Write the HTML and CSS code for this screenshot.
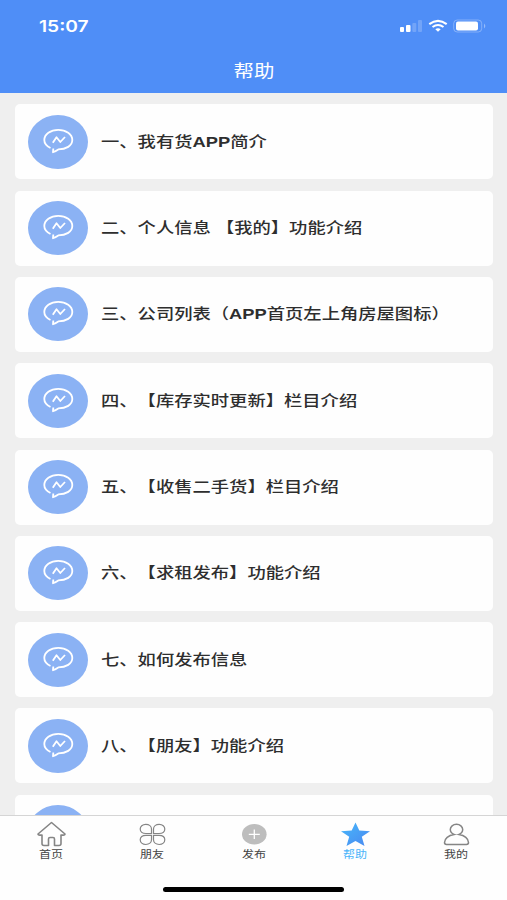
FILE: index.html
```
<!DOCTYPE html>
<html lang="zh-CN">
<head>
    <meta charset="UTF-8">
    <meta name="viewport" content="width=device-width, initial-scale=1.0">
    <title>帮助</title>
    <link rel="stylesheet" href="styles.css">
</head>
<body>
    <svg class="defs" width="0" height="0">
        <symbol id="chat" viewBox="0 0 60 54">
            <path d="M22.500 33C18.500 31 16.300 28.300 16.300 25C16.300 19.200 22.500 14.800 30.300 14.800S44.300 19.200 44.300 25S38 34.400 30.300 34.400C29 35.300 27 36.500 25 37.200L25.300 33.500" />
            <path d="M24.800 27.800L28.500 22.300L32.300 27L37 22" />
        </symbol>
    </svg>
    <div class="page">
        <div class="header">
            <div class="status">
                <span class="time">15:07</span>
                <svg class="signal" width="88" height="16" viewBox="0 0 88 16">
                    <g fill="#fff">
                        <rect x="1" y="9" width="4" height="5" rx="1" />
                        <rect x="7" y="7" width="4.500" height="7" rx="1" />
                        <rect x="13.300" y="5" width="4" height="9" rx="1" opacity=".2" />
                        <rect x="19" y="2" width="4" height="12" rx="1" opacity=".2" />
                        <rect x="57" y="3.500" width="22" height="9" rx="2" />
                        <path d="M85 5.500q2.600 2.500 0 5z" opacity=".4" />
                        <path d="M36.300 11.200q2.700-1.700 5.400 0L39 13.700z" />
                    </g>
                    <rect x="54.700" y="2" width="28" height="12" rx="3.500" fill="none" stroke="#fff" opacity=".3" />
                    <path d="M30.300 6.100q8.700-6.600 17.400 0M33.500 9q5.500-4 11 0" fill="none" stroke="#fff" stroke-width="2.100" />
                </svg>
            </div>
            <div class="title"><span>帮助</span></div>
        </div>
        <div class="list">
            <div class="item"><div class="icon"><svg><use href="#chat" /></svg></div><span class="text">一、我有货<b>APP</b>简介</span></div>
            <div class="item"><div class="icon"><svg><use href="#chat" /></svg></div><span class="text">二、个人信息 【我的】功能介绍</span></div>
            <div class="item"><div class="icon"><svg><use href="#chat" /></svg></div><span class="text">三、公司列表（<b>APP</b>首页左上角房屋图标）</span></div>
            <div class="item"><div class="icon"><svg><use href="#chat" /></svg></div><span class="text">四、【库存实时更新】栏目介绍</span></div>
            <div class="item"><div class="icon"><svg><use href="#chat" /></svg></div><span class="text">五、【收售二手货】栏目介绍</span></div>
            <div class="item"><div class="icon"><svg><use href="#chat" /></svg></div><span class="text">六、【求租发布】功能介绍</span></div>
            <div class="item"><div class="icon"><svg><use href="#chat" /></svg></div><span class="text">七、如何发布信息</span></div>
            <div class="item"><div class="icon"><svg><use href="#chat" /></svg></div><span class="text">八、【朋友】功能介绍</span></div>
            <div class="item"><div class="icon"></div></div>
        </div>
        <div class="footer">
            <div class="tabs">
                <div class="tab">
                    <svg width="32" height="26" viewBox="0 0 32 26">
                        <path d="M16.500 1.500L3 13C2.800 14.200 4 14.300 7 14V22.500Q7 24.500 9 24.500H13.500V18Q13.500 16.500 15 16.500H18Q19.500 16.500 19.500 18V24.500H24Q26 24.500 26 22.500V14C29 14.300 30.200 14.200 30 13Z" stroke-width="1.600" stroke-linejoin="round" />
                    </svg>
                    <span>首页</span>
                </div>
                <div class="tab">
                    <svg width="32" height="26" viewBox="0 0 32 26">
                        <path d="M15.500 12.500H10C6.300 12.500 4.200 10.600 4.200 8S6.500 3.300 9.800 3.300S15.500 5.300 15.500 8ZM17.500 12.500H23C26.700 12.500 28.800 10.600 28.800 8S26.500 3.300 23.200 3.300S17.500 5.300 17.500 8ZM15.500 14.300H10C6.300 14.300 4.200 16.200 4.200 18.800S6.500 23.500 9.800 23.500S15.500 21.500 15.500 18.800ZM17.500 14.300H23C26.700 14.300 28.800 16.200 28.800 18.800S26.500 23.500 23.200 23.500S17.500 21.500 17.500 18.800Z" stroke-width="1.200" />
                    </svg>
                    <span>朋友</span>
                </div>
                <div class="tab">
                    <svg width="32" height="26" viewBox="0 0 32 26">
                        <ellipse cx="16.300" cy="13.300" rx="12.300" ry="10.300" fill="#bdbdbd" stroke="none" />
                        <path d="M10.800 13.300H21.800M16.300 8.500V18.100" stroke="#fff" stroke-width="1.300" />
                    </svg>
                    <span>发布</span>
                </div>
                <div class="tab active">
                    <svg width="32" height="26" viewBox="0 0 32 26">
                        <defs>
                            <linearGradient id="star" x1="0" y1="0" x2="1" y2="1">
                                <stop offset="0" stop-color="#47b8fb" />
                                <stop offset="1" stop-color="#4a88f0" />
                            </linearGradient>
                        </defs>
                        <path d="M16.500 1.500L20.300 9.600L31 10.200L22.800 15.700L25.500 25L16.500 20L7.500 25L10.200 15.700L2 10.200L12.700 9.600Z" fill="url(#star)" stroke="none" />
                    </svg>
                    <span>帮助</span>
                </div>
                <div class="tab">
                    <svg width="32" height="26" viewBox="0 0 32 26">
                        <path d="M14 13.500C11.500 12.500 10.300 10.500 10.300 8.600C10.300 5.600 13 3.300 16.500 3.300S22.700 5.600 22.700 8.600C22.700 10.500 21.500 12.500 19 13.500C24.500 14.300 28.500 17.500 28.500 21.500Q28.500 23.400 26.500 23.400H6.500Q4.500 23.400 4.500 21.500C4.500 17.500 8.500 14.300 14 13.500Z" stroke-width="1.500" />
                    </svg>
                    <span>我的</span>
                </div>
            </div>
            <div class="bar"></div>
        </div>
    </div>
</body>
</html>
```
FILE: styles.css
```
* {
    padding: 0;
    margin: 0;
    box-sizing: border-box;
}
body {
    font-family: "Liberation Sans", "Noto Sans CJK SC", sans-serif;
    text-spacing-trim: space-all;
    background-color: #efefef;
}
.defs {
    display: block;
}
.page {
    display: flex;
    flex-direction: column;
    height: 900px;
    overflow: hidden;
}
.header {
    flex: none;
    height: 93.300px;
    background-color: #4f8ef7;
    color: #fff;
}
.status {
    display: flex;
    justify-content: space-between;
    align-items: center;
    height: 52px;
    padding: 0 20px 0 38.500px;
}
.time {
    font-family: Inter, sans-serif;
    font-size: 16px;
    font-weight: 600;
    transform: scaleX(1.2);
    transform-origin: left;
}
.title {
    height: 40px;
    line-height: 40px;
    text-align: center;
    font-size: 17px;
}
.title span {
    display: inline-block;
    transform: scaleX(1.2);
}
.list {
    flex: 1;
    min-height: 0;
    overflow: hidden;
    padding: 11px 14px 0 14.500px;
}
.item {
    display: flex;
    align-items: center;
    height: 75px;
    margin-bottom: 11.320px;
    padding-left: 13px;
    background-color: #fefefe;
    border-radius: 5px;
}
.icon {
    width: 60px;
    height: 54px;
    border-radius: 50%;
    background-color: #8bb2f4;
}
.icon svg {
    display: block;
    width: 60px;
    height: 54px;
    fill: none;
    stroke: #fff;
    stroke-width: 1.800;
    stroke-linejoin: round;
}
.text {
    margin-left: 13.500px;
    padding-bottom: 3px;
    color: #2e2e2e;
    font-size: 15px;
    font-weight: 500;
    white-space: nowrap;
    transform: scaleX(1.22);
    transform-origin: left;
}
.footer {
    flex: none;
    height: 85px;
    background-color: #fefefe;
    border-top: 1.500px solid #d5d5d5;
}
.tabs {
    display: flex;
    height: 71px;
    padding-top: 5px;
}
.tab {
    flex: 1;
    display: flex;
    flex-direction: column;
    align-items: center;
    color: #444;
    font-size: 10px;
    line-height: 15px;
}
.tab svg {
    fill: none;
    stroke: #858585;
}
.tab span {
    transform: scaleX(1.2);
}
.tab.active {
    color: #4ab4fa;
}
.bar {
    width: 181px;
    height: 5px;
    margin: 0 auto;
    border-radius: 3px;
    background-color: #000;
}
```
